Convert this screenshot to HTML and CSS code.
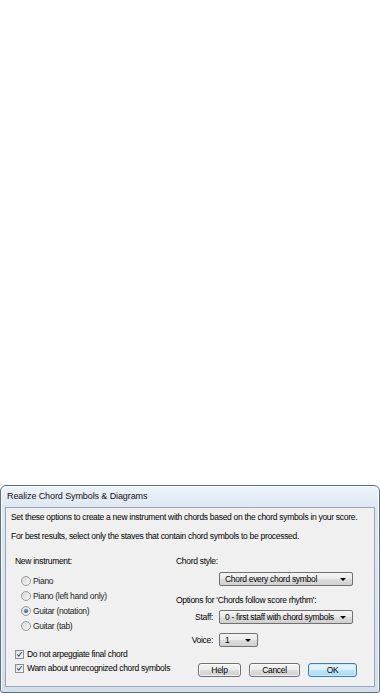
FILE: index.html
```html
<!DOCTYPE html>
<html lang="en">
<head>
  <meta charset="UTF-8" />
  <meta name="viewport" content="width=device-width, initial-scale=1.0"/>
  <title>Realize Chord Symbols &amp; Diagrams</title>
  <link rel="stylesheet" href="styles.css">
</head>
<body>
  <div class="window">
    <div class="titlebar">Realize Chord Symbols &amp; Diagrams</div>

    <div class="panel">
      <p class="intro">Set these options to create a new instrument with chords based on the chord symbols in your score.</p>
      <p class="intro second">For best results, select only the staves that contain chord symbols to be processed.</p>

      <div class="cols">
        <div class="col-left">
          <div class="label">New instrument:</div>
          <div class="radios">
            <label class="radio"><span class="dot"></span>Piano</label>
            <label class="radio"><span class="dot"></span>Piano (left hand only)</label>
            <label class="radio"><span class="dot checked"></span>Guitar (notation)</label>
            <label class="radio"><span class="dot"></span>Guitar (tab)</label>
          </div>
          <div class="checks">
            <label class="check">
              <span class="box"><svg width="9" height="9" viewBox="0 0 9 9"><path d="M1.6 4.4 L3.6 6.6 L7.4 1.6" fill="none" stroke="#3d5080" stroke-width="1.4"/></svg></span>
              Do not arpeggiate final chord
            </label>
            <label class="check">
              <span class="box"><svg width="9" height="9" viewBox="0 0 9 9"><path d="M1.6 4.4 L3.6 6.6 L7.4 1.6" fill="none" stroke="#3d5080" stroke-width="1.4"/></svg></span>
              Warn about unrecognized chord symbols
            </label>
          </div>
        </div>

        <div class="col-right">
          <div class="label">Chord style:</div>
          <div class="select style-select">Chord every chord symbol<span class="arrow"></span></div>
          <div class="label options">Options for 'Chords follow score rhythm':</div>
          <div class="field staff">
            <span class="field-label">Staff:</span>
            <div class="select staff-select">0 - first staff with chord symbols<span class="arrow"></span></div>
          </div>
          <div class="field voice">
            <span class="field-label">Voice:</span>
            <div class="select voice-select">1<span class="arrow"></span></div>
          </div>
          <div class="buttons">
            <button class="btn help">Help</button>
            <button class="btn cancel">Cancel</button>
            <button class="btn ok">OK</button>
          </div>
        </div>
      </div>
    </div>
  </div>
</body>
</html>
```

FILE: styles.css
```css
* { box-sizing: border-box; margin: 0; padding: 0; }
html, body { height: 694px; }
body { background: #fff; display: flex; flex-direction: column; justify-content: flex-end; padding-bottom: 1px; font-family: "Liberation Sans", Arial, sans-serif; font-size: 8.5px; letter-spacing: -0.3px; color: #000; }

.window { width: 380px; border: 1px solid #5f6f82; border-radius: 6px 6px 3px 3px; padding: 0 4px 5px 4px; background: linear-gradient(to bottom, #eef3f9 0px, #dfe8f2 20px, #d3dfec 100%); box-shadow: inset 1px 1px 0 rgba(255,255,255,0.8), inset -1px 0 0 rgba(255,255,255,0.7); }
.titlebar { height: 21px; line-height: 21px; padding-left: 2px; font-size: 9px; letter-spacing: -0.1px; color: #111; }

.panel { height: 180px; background: #f0f0f0; border: 1px solid #98a7b8; padding: 0 5px; }
.intro { margin-top: 3px; line-height: 12px; white-space: nowrap; }
.intro.second { margin-top: 7px; }

.cols { display: flex; margin-top: 13px; padding-left: 4px; }
.col-left { width: 161px; }
.col-right { flex: 1; }
.label { line-height: 12px; }

.radios { margin-top: 6px; padding-left: 6px; }
.radio { display: flex; align-items: center; height: 15px; color: #222; }
.dot { width: 10px; height: 10px; border-radius: 50%; border: 1px solid #9a9a9a; background: linear-gradient(135deg, #d6d6d6, #f7f7f7); margin-right: 2px; position: relative; }
.dot.checked::after { content: ""; position: absolute; left: 2px; top: 2px; width: 4px; height: 4px; border-radius: 50%; background: radial-gradient(circle at 35% 35%, #6f9fd8, #17386b); }

.checks { margin-top: 14px; }
.check { display: flex; align-items: center; height: 14px; }
.box { width: 9px; height: 9px; border: 1px solid #8e8f8f; background: linear-gradient(135deg, #dedede, #fafafa); margin-right: 3px; display: flex; align-items: center; justify-content: center; }
.box svg { display: block; }

.select { position: relative; height: 14px; line-height: 12px; border: 1px solid #707070; border-radius: 2px; padding-left: 5px; background: linear-gradient(to bottom, #f4f4f4 0%, #ebebeb 50%, #dddddd 51%, #d0d0d0 100%); white-space: nowrap; }
.arrow { position: absolute; right: 6px; top: 5px; border-left: 3px solid transparent; border-right: 3px solid transparent; border-top: 3px solid #000; }
.style-select { margin-top: 5px; margin-left: 43px; width: 134px; }
.options { margin-top: 8px; }
.field { display: flex; align-items: center; }
.field-label { width: 37px; text-align: right; margin-right: 6px; }
.staff { margin-top: 4px; }
.staff-select { width: 134px; }
.voice { margin-top: 9px; }
.voice-select { width: 39px; }

.buttons { display: flex; margin-top: 16px; margin-left: 22px; }
.btn { height: 14px; border: 1px solid #707070; border-radius: 3px; font-family: inherit; font-size: 8.5px; letter-spacing: -0.3px; color: #000; background: linear-gradient(to bottom, #f4f4f4 0%, #ebebeb 50%, #dddddd 51%, #d0d0d0 100%); box-shadow: inset 0 0 0 1px rgba(255,255,255,0.7); line-height: 11px; }
.help { width: 43px; }
.cancel { width: 51px; margin-left: 8px; }
.ok { width: 49px; margin-left: 8px; border-color: #3c7fb1; background: linear-gradient(to bottom, #eaf6fd 0%, #d9f0fc 50%, #bee6fd 51%, #a7d9f5 100%); box-shadow: inset 0 0 0 1px #c9ecfd; }
```
